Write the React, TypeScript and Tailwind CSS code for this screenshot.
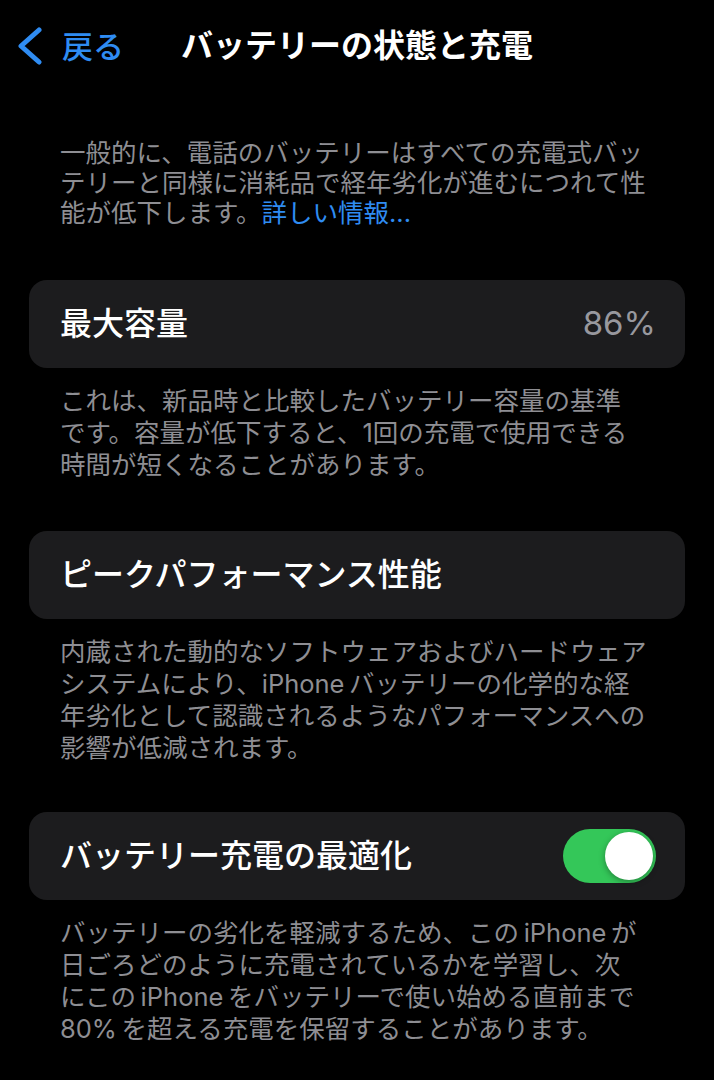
import type { ReactNode } from "react"

const font = { fontFamily: 'Inter, "Noto Sans CJK JP", sans-serif' }

function Card({ children }: { children: ReactNode }) {
  return (
    <div className="mx-[29px] flex h-[88px] items-center justify-between rounded-[18px] bg-[#1c1c1e] pl-[31px] pr-[29px]">
      {children}
    </div>
  )
}

// group footnote, one entry per rendered line
function Footer({ lines }: { lines: ReactNode[] }) {
  return (
    <p className="px-[60px] pt-[17px] text-[25.5px] leading-[32px] text-[#8e8e93]">
      {lines.map((line, i) => (
        <span key={i} className="block whitespace-nowrap">
          {line}
        </span>
      ))}
    </p>
  )
}

function Toggle() {
  return (
    <div className="flex h-[54px] w-[93px] items-center justify-end rounded-full bg-[#34c759] p-[3px]">
      <div className="h-[48px] w-[48px] rounded-full bg-white shadow-[0_2px_6px_rgba(0,0,0,0.35)]" />
    </div>
  )
}

export default function App() {
  return (
    <div className="min-h-screen bg-black pb-10 antialiased" style={font}>
      {/* nav bar */}
      <header className="grid h-[92px] grid-cols-[1fr_auto_1fr] items-center">
        <button className="flex items-center gap-[19px] pl-[16px] text-[#2f8cf2]">
          <svg width="27" height="38" viewBox="0 0 27 38" fill="none">
            <path d="M23 3 L5 19 L23 35" stroke="currentColor" strokeWidth="5" strokeLinecap="round" strokeLinejoin="round" />
          </svg>
          <span className="text-[31px] font-medium leading-none">戻る</span>
        </button>
        <h1 className="text-[32px] font-bold leading-none text-white">バッテリーの状態と充電</h1>
        <div />
      </header>

      <p className="mt-[46px] px-[60px] text-[25.5px] leading-[30px] text-[#8e8e93]">
        <span className="block whitespace-nowrap">一般的に、電話のバッテリーはすべての充電式バッ</span>
        <span className="block whitespace-nowrap">テリーと同様に消耗品で経年劣化が進むにつれて性</span>
        <span className="block whitespace-nowrap">
          能が低下します。<a className="text-[#2f8cf2]">詳しい情報...</a>
        </span>
      </p>

      <div className="mt-[52px]">
        <Card>
          <span className="text-[32px] font-medium text-white">最大容量</span>
          <span className="text-[33px] text-[#98989e]">86%</span>
        </Card>
        <Footer
          lines={[
            "これは、新品時と比較したバッテリー容量の基準",
            "です。容量が低下すると、1回の充電で使用できる",
            "時間が短くなることがあります。",
          ]}
        />
      </div>

      <div className="mt-[50px]">
        <Card>
          <span className="text-[32px] font-medium text-white">ピークパフォーマンス性能</span>
        </Card>
        <Footer
          lines={[
            "内蔵された動的なソフトウェアおよびハードウェア",
            "システムにより、iPhone\u2009バッテリーの化学的な経",
            "年劣化として認識されるようなパフォーマンスへの",
            "影響が低減されます。",
          ]}
        />
      </div>

      <div className="mt-[48px]">
        <Card>
          <span className="text-[32px] font-medium text-white">バッテリー充電の最適化</span>
          <Toggle />
        </Card>
        <Footer
          lines={[
            "バッテリーの劣化を軽減するため、この\u2009iPhone\u2009が",
            "日ごろどのように充電されているかを学習し、次",
            "にこの\u2009iPhone\u2009をバッテリーで使い始める直前まで",
            "80%\u2009を超える充電を保留することがあります。",
          ]}
        />
      </div>
    </div>
  )
}
